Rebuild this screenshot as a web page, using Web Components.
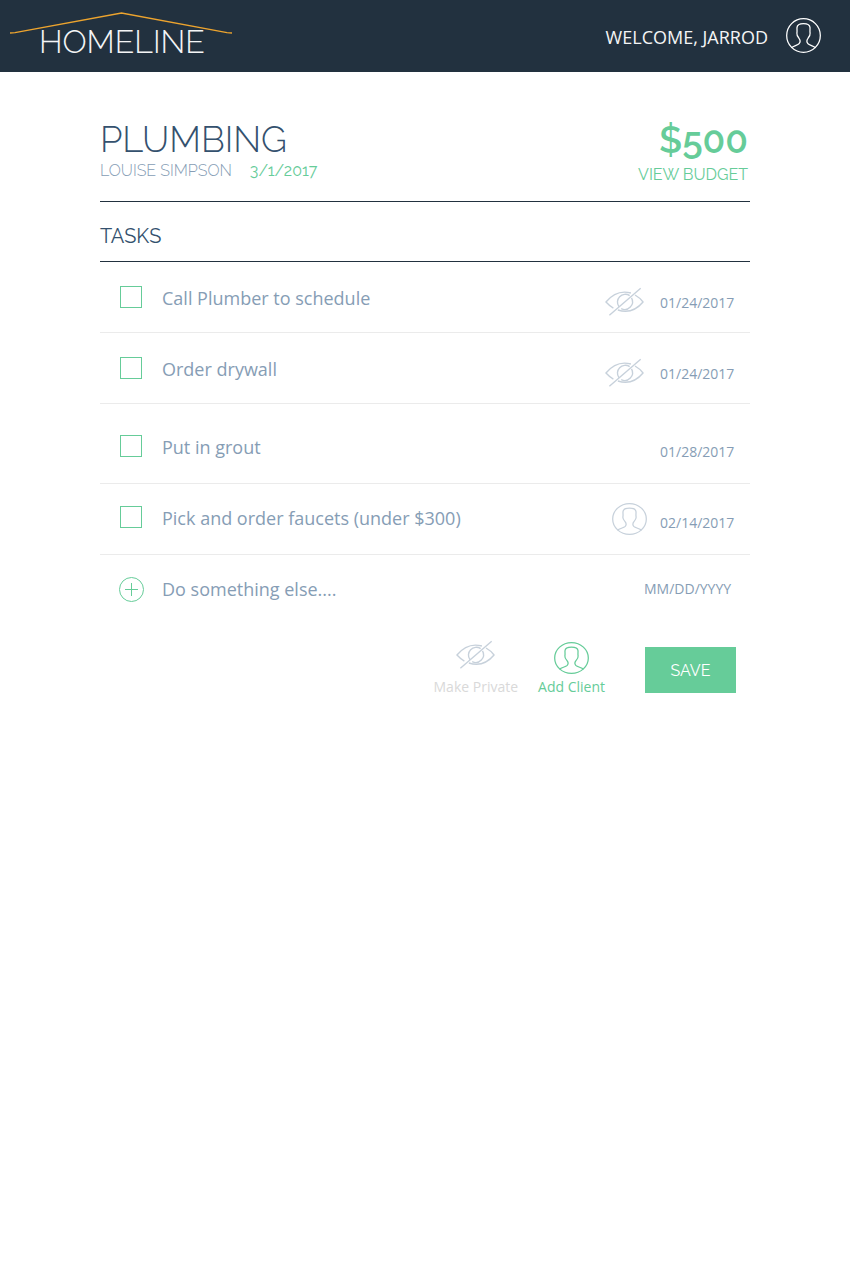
<!DOCTYPE html>
<html lang="en">
<head>
<meta charset="utf-8">
<meta name="viewport" content="width=device-width, initial-scale=1">
<title>Homeline – Plumbing</title>
<style>
  :root {
    --navy: #22313f;
    --ink: #34516e;
    --muted: #869db5;
    --icon: #c7d1db;
    --green: #66cc99;
    --rule: #ebebeb;
    --display: Raleway, Lato, sans-serif;
    --text: "Open Sans", "Noto Sans", sans-serif;
  }
  body { margin: 0; background: #fff; color: var(--muted); font: 18px/24px var(--text); }
</style>
</head>
<body>
<home-app></home-app>
<script>
const define = (name, html, setup) => {
  const template = document.createElement('template');
  template.innerHTML = html;
  customElements.define(name, class extends HTMLElement {
    constructor() {
      super();
      this.attachShadow({ mode: 'open' }).append(template.content.cloneNode(true));
    }
    connectedCallback() { if (setup) setup(this, this.shadowRoot); }
  });
};

define('user-icon', `
<style>
  :host { display: block; width: 35px; height: 32px; color: var(--icon); }
  svg { display: block; width: 100%; height: 100%; fill: none; stroke: currentColor; stroke-width: 1.3; }
</style>
<svg viewBox="0 0 36 36" preserveAspectRatio="none" aria-hidden="true">
  <circle cx="18" cy="18" r="17.3"/>
  <path d="M5.6 30.6C8 28.7 12 27.9 13.6 26.2C15.2 24.2 14.8 22.6 13.2 20.6C11.6 18.9 11 17.6 11.2 15.6C11.6 13.6 11.2 11.7 11.3 9.9C11.5 7.2 14 5.8 18 5.8C22 5.8 24.5 7.2 24.7 9.9C24.8 11.7 24.4 13.6 24.8 15.6C25 17.6 24.4 18.9 22.8 20.6C21.2 22.6 20.8 24.2 22.4 26.2C24 27.9 28 28.7 30.4 30.6"/>
</svg>`);

define('private-icon', `
<style>
  :host { display: block; width: 39px; height: 30px; color: var(--icon); }
  svg { display: block; width: 100%; height: 100%; fill: none; stroke: currentColor; stroke-width: 1.4; }
</style>
<svg viewBox="0 0 40 30" aria-hidden="true">
  <path d="M8.6 21.2C5.5 19.5 3 17.2 1 15C8 6.5 17 3.2 26.6 5.8M30.8 7.8C34 9.6 36.8 12 39 15C31.5 24 23 26.4 13.2 23.2"/>
  <path d="M14.3 19.8A8 8 0 0 1 25.3 8.5M27.2 10.8A8 8 0 0 1 16.6 21.8M4.5 28.6L36.6 .8"/>
</svg>`);

define('brand-logo', `
<style>
  :host { display: block; }
  a { display: grid; color: #f4f5f6; text-decoration: none; font: 300 32px/40px var(--display); }
  svg, span { grid-area: 1 / 1; }
  svg { display: block; width: 222px; height: 22px; fill: none; stroke: #eda42e; stroke-width: 1.3; }
  span { padding: 10px 0 0 29px; }
</style>
<a href="#home">
  <svg viewBox="0 0 222 22" aria-hidden="true"><path d="M0 21L5 20.6L111.5 1L217 20.6L222 21"/></svg>
  <span>HOMELINE</span>
</a>`);

define('site-header', `
<style>
  :host { display: block; background: var(--navy); }
  header { display: flex; justify-content: space-between; align-items: flex-start; min-height: 60px; padding: 12px 29px 0 10px; }
  a { display: flex; gap: 18px; color: #f4f5f6; text-decoration: none; }
  span { padding-top: 8px; line-height: 34px; }
  user-icon { width: 35px; height: 35px; margin-top: 6px; color: #fff; }
</style>
<header>
  <brand-logo></brand-logo>
  <a href="#account"><span><slot></slot></span><user-icon></user-icon></a>
</header>`);

define('project-heading', `
<style>
  :host { display: flex; justify-content: space-between; padding: 45px 2px 14px 0; border-bottom: 1px solid var(--navy); font: 16px/24px var(--display); font-variant-numeric: oldstyle-nums; }
  h1 { margin: 0; color: var(--ink); font: 300 36px/44px var(--display); }
  .meta { display: flex; gap: 18px; font-weight: 300; line-height: 20px; }
  .date { color: var(--green); font-weight: 400; }
  .budget { color: var(--green); text-align: right; }
  .amount { font-size: 37px; line-height: 46px; font-weight: 600; }
  a { display: block; color: inherit; text-decoration: none; }
</style>
<div>
  <h1><slot name="title"></slot></h1>
  <div class="meta"><span><slot name="owner"></slot></span><span class="date"><slot name="date"></slot></span></div>
</div>
<div class="budget">
  <div class="amount"><slot name="amount"></slot></div>
  <a href="#budget">VIEW BUDGET</a>
</div>`);

define('task-item', `
<style>
  :host { display: block; border-bottom: 1px solid var(--rule); }
  .row { display: grid; grid-template-columns: 22px 1fr auto 74px; grid-auto-rows: 22px; column-gap: 20px; padding: 24px 16px 24px 20px; }
  :host([spaced]) .row { padding-top: 31px; padding-bottom: 26px; }
  :host([last]) .row { padding-top: 22px; padding-bottom: 26px; }
  input { appearance: none; width: 22px; height: 22px; margin: 0; border: 1px solid var(--green); background: #fff; }
  input:checked { background: var(--green); }
  .icon { display: flex; align-items: center; margin-right: -4px; padding-top: 10px; }
  :host([last]) .icon { margin-right: -7px; padding-top: 4px; }
  time { padding-top: 5px; font-size: 14px; }
</style>
<div class="row">
  <input type="checkbox" id="done">
  <label for="done"><slot></slot></label>
  <span class="icon"><slot name="icon"></slot></span>
  <time></time>
</div>`, (host, root) => { root.querySelector('time').textContent = host.getAttribute('due'); });

define('new-task', `
<style>
  :host { display: block; }
  .row { display: grid; grid-template-columns: 25px 1fr 91px; column-gap: 18px; padding: 22px 15px 0 19px; }
  button { width: 25px; height: 25px; padding: 0; border: 0; background: none; color: var(--green); }
  svg { display: block; width: 25px; height: 25px; fill: none; stroke: currentColor; }
  input { width: 100%; height: 24px; padding: 0; border: 0; outline: 0; background: none; color: var(--muted); font: 18px/24px var(--text); }
  .date { font-size: 14px; }
  input::placeholder { color: var(--muted); opacity: 1; }
</style>
<form class="row">
  <button type="button" aria-label="Add task"><svg viewBox="0 0 25 25"><circle cx="12.5" cy="12.5" r="12"/><path d="M6 12.5H19M12.5 6V19"/></svg></button>
  <input aria-label="New task" placeholder="Do something else....">
  <input class="date" aria-label="Due date" placeholder="MM/DD/YYYY">
</form>`);

define('task-actions', `
<style>
  :host { display: flex; justify-content: flex-end; align-items: flex-start; padding: 38px 14px 0 0; }
  button { padding: 0; border: 0; background: none; font: 14px/20px var(--text); }
  .option { display: grid; grid-template-rows: 36px 22px; justify-items: center; align-items: center; margin-right: 20px; white-space: nowrap; }
  .private { color: #d9d9d9; }
  .client { color: var(--green); margin-right: 40px; }
  private-icon { align-self: start; }
  user-icon { color: var(--green); }
  .save { width: 91px; height: 46px; margin-top: 7px; padding-top: 2px; background: var(--green); color: #fff; font: 16px/24px var(--display); }
</style>
<button class="option private" type="button"><private-icon></private-icon><span>Make Private</span></button>
<button class="option client" type="button"><user-icon></user-icon><span>Add Client</span></button>
<button class="save" type="button">SAVE</button>`);

define('home-app', `
<style>
  :host { display: block; }
  main { margin: 0 100px; }
  h2 { margin: 0; padding: 21px 0 12px; border-bottom: 1px solid var(--navy); color: var(--ink); font: 400 20px/26px var(--display); }
</style>
<site-header>WELCOME, JARROD</site-header>
<main>
  <project-heading>
    <span slot="title">PLUMBING</span><span slot="owner">LOUISE SIMPSON</span>
    <span slot="date">3/1/2017</span><span slot="amount">$500</span>
  </project-heading>
  <section>
    <h2>TASKS</h2>
    <task-item due="01/24/2017">Call Plumber to schedule<private-icon slot="icon"></private-icon></task-item>
    <task-item due="01/24/2017">Order drywall<private-icon slot="icon"></private-icon></task-item>
    <task-item due="01/28/2017" spaced>Put in grout</task-item>
    <task-item due="02/14/2017" last>Pick and order faucets (under $300)<user-icon slot="icon"></user-icon></task-item>
    <new-task></new-task>
    <task-actions></task-actions>
  </section>
</main>`);
</script>
</body>
</html>
